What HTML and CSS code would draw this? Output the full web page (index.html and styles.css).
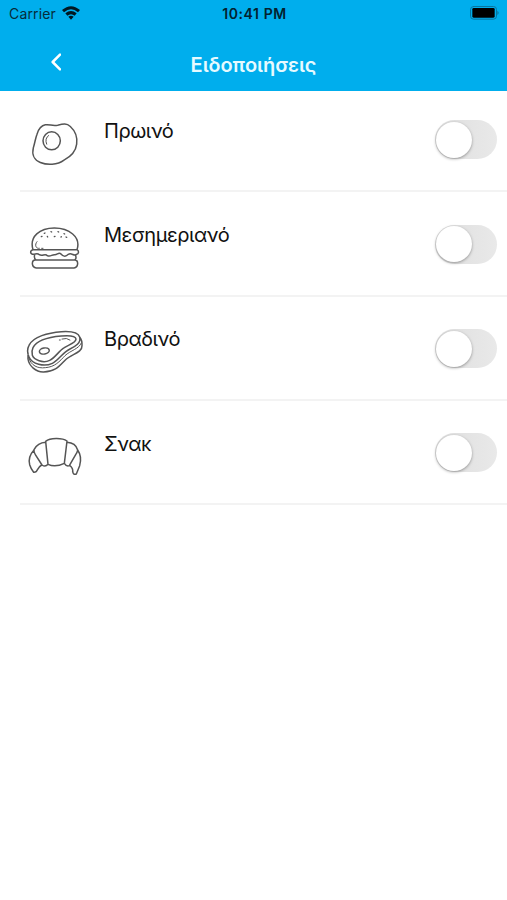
FILE: index.html
```html
<!DOCTYPE html>
<html lang="el">
<head>
<meta charset="utf-8">
<meta name="viewport" content="width=device-width, initial-scale=1">
<title>Ειδοποιήσεις</title>
<link rel="stylesheet" href="styles.css">
</head>
<body>
<header class="header">
  <div class="status">
    <div class="carrier"><span>Carrier</span>
      <svg class="wifi" viewBox="0 0 54 42"><path d="M0 12Q27-11 54 12l-6 7Q27 1 6 19zM10 22Q27 8 44 22l-6 7Q27 20 16 29zM19 32Q27 26 35 32l-8 9z"/></svg>
    </div>
    <time class="clock">10:41 PM</time>
    <svg class="battery" viewBox="0 0 90 42"><rect x="1.5" y="1.5" width="78" height="38" rx="9"/><rect class="charge" x="7" y="6" width="67" height="29" rx="4"/><path class="charge-tip" d="M82 14q8 6 0 13z"/></svg>
  </div>
  <nav class="nav">
    <button class="back" aria-label="Πίσω"><svg viewBox="0 0 30 52"><path d="M27 4 5 26 27 48"/></svg></button>
    <h1 class="title">Ειδοποιήσεις</h1>
    <span></span>
  </nav>
</header>
<main class="list">
  <div class="row">
    <svg class="icon" viewBox="0 1.5 240 195"><path d="M91 43C104 41 112 47 128 44C145 40 155 38 166 48C178 59 188 79 185 101C182 126 164 140 147 149C127 164 96 164 76 156C58 149 50 132 55 112C60 96 61 84 66 71C71 55 79 45 91 43Z"/><ellipse cx="110" cy="91" rx="26" ry="27"/><path class="fine" d="M101 75Q88 84 95 101"/></svg>
    <span class="label">Πρωινό</span>
    <button class="switch" role="switch" aria-checked="false" aria-label="Πρωινό"><span class="knob"></span></button>
  </div>
  <div class="row">
    <svg class="icon" viewBox="0 -1 240 195"><path d="M54 103C42 63 75 38 118 38S199 64 186 103M54 103H186C193 107 191 116 185 117C177 124 170 111 160 117C151 126 144 123 137 115C131 110 126 119 119 118C111 117 106 126 97 121C90 112 82 125 73 118C66 111 59 119 51 116C44 112 47 104 54 103ZM59 118Q56 130 63 134M181 119Q186 130 179 134M61 134H179Q188 134 188 145Q187 157 177 158H64Q53 157 52 145Q52 134 61 134Z"/><path class="fine" d="M66 79C58 88 62 101 73 99M80 99h4"/><path class="seeds" d="M88 54l2-1M108 49l2 1M129 49l2 1M147 55l2 1M79 64l2-1M97 63l1 2M118 64l2-1M138 65l1-1M153 65l2 1"/></svg>
    <span class="label">Μεσημεριανό</span>
    <button class="switch" role="switch" aria-checked="false" aria-label="Μεσημεριανό"><span class="knob"></span></button>
  </div>
  <div class="row">
    <svg class="icon" viewBox="0 -3 240 195"><path d="M42 76C54 50 100 38 139 35C170 33 190 37 194 51C199 69 181 79 165 87C142 98 131 121 112 130C87 142 51 132 42 111C36 97 36 87 42 76ZM39 99V117C42 137 62 157 86 156C122 155 133 138 151 120C170 102 202 98 201 77Q202 61 194 51"/><path d="M54 82C66 58 103 50 139 47C163 45 182 47 183 56C184 67 162 73 148 82C131 92 119 114 104 120C84 130 57 119 52 105Q49 92 54 82Z" transform="translate(0 1)"/><path class="fine" d="M41 113C48 137 68 146 91 143C120 141 134 124 150 107C167 91 192 87 199 69"/><ellipse cx="88" cy="93" rx="15" ry="9" transform="rotate(-10 88 93)"/><path class="fine" d="M133 60h3M141 57Q155 52 165 60"/></svg>
    <span class="label">Βραδινό</span>
    <button class="switch" role="switch" aria-checked="false" aria-label="Βραδινό"><span class="knob"></span></button>
  </div>
  <div class="row">
    <svg class="icon" viewBox="0 -6 240 195"><path d="M92 49C105 38 142 38 156 48L148 115Q121 128 99 118ZM92 52C77 53 64 61 57 74Q56 82 61 89L81 120Q91 127 99 118M156 52C172 53 184 61 188 75Q187 82 182 89L163 122Q155 126 148 115M57 75C45 88 40 103 44 119Q48 132 56 142Q64 143 68 133Q72 125 80 120M188 75C199 91 198 108 194 122L184 147Q175 151 173 140Q175 130 164 121"/></svg>
    <span class="label">Σνακ</span>
    <button class="switch" role="switch" aria-checked="false" aria-label="Σνακ"><span class="knob"></span></button>
  </div>
</main>
</body>
</html>
```
FILE: styles.css
```css
* { box-sizing: border-box; }
body {
  margin: 0;
  min-height: 900px;
  background: #fff;
  color: #111;
  font-family: Inter, "Liberation Sans", sans-serif;
}
button { border: 0; padding: 0; background: none; }
svg { display: block; fill: none; stroke-linecap: round; stroke-linejoin: round; }

.header { height: 91px; background: #00aeed; position: relative; z-index: 1; }
.status {
  height: 28px;
  display: grid;
  grid-template-columns: 1fr auto 1fr;
  align-items: center;
  padding: 0 7px 1px 9px;
  color: #062c3b;
  font-size: 14px;
}
.carrier { display: flex; align-items: center; gap: 6px; letter-spacing: 0.15px; }
.wifi { width: 18px; height: 14px; fill: #001823; margin-top: -1px; }
.clock { font-weight: 600; font-size: 14px; letter-spacing: 0.6px; color: #03222f; }
.battery { width: 30px; height: 14px; justify-self: end; margin-top: -1px; stroke: #0876a0; stroke-width: 3; }
.charge { fill: #000; stroke: none; }
.charge-tip { fill: #0876a0; stroke: none; }

.nav { height: 63px; display: grid; grid-template-columns: 1fr auto 1fr; align-items: center; padding-top: 10px; }
.back { width: 10px; height: 18px; margin: -6px 0 0 51px; }
.back svg { width: 10px; height: 18px; stroke: #fff; stroke-width: 7.5; }
.title { margin: 0; color: #e6faff; font-size: 20px; line-height: 24px; font-weight: 600; letter-spacing: -0.05px; }

.list { margin: -3px 0 0 20px; }
.row {
  height: 104.33px;
  display: flex;
  align-items: flex-start;
  border-bottom: 2px solid #f3f3f3;
  padding-right: 10px;
}
.icon { width: 80px; height: 65px; margin: 22.5px 9px 0 -5px; flex: none; stroke: #555; stroke-width: 4.5; }
.fine { stroke-width: 3; }
.seeds { stroke-width: 4; }
.label { flex: 1; margin-top: 30.8px; font-size: 20px; line-height: 25px; letter-spacing: -0.45px; }
.switch { width: 62px; height: 39px; margin-top: 32.4px; border-radius: 20px; background: linear-gradient(90deg, #dedede, #e9e9e9); }
.knob {
  display: block;
  width: 36px;
  height: 36px;
  margin-left: 1px;
  border-radius: 50%;
  background: #fff;
  box-shadow: 0 1px 3px rgba(0, 0, 0, 0.35);
}
```
